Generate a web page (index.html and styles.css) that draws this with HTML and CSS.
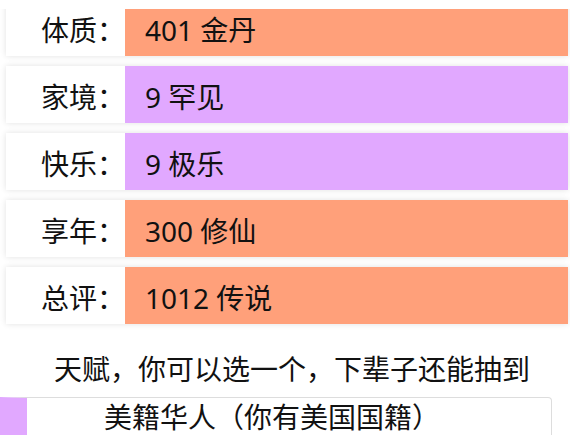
FILE: index.html
```html
<!DOCTYPE html>
<html lang="zh-CN">

<head>
    <meta charset="utf-8">
    <title>人生重开 - 结算</title>
    <link rel="stylesheet" href="styles.css">
</head>

<body>
    <div class="top-bar"></div>
    <ul class="summary">
        <li class="row">
            <span class="label">体质：</span>
            <span class="value orange">401 金丹</span>
        </li>
        <li class="row">
            <span class="label">家境：</span>
            <span class="value purple">9 罕见</span>
        </li>
        <li class="row">
            <span class="label">快乐：</span>
            <span class="value purple">9 极乐</span>
        </li>
        <li class="row">
            <span class="label">享年：</span>
            <span class="value orange">300 修仙</span>
        </li>
        <li class="row">
            <span class="label">总评：</span>
            <span class="value orange">1012 传说</span>
        </li>
    </ul>
    <div class="tip">天赋，你可以选一个，下辈子还能抽到</div>
    <ul class="talents">
        <li class="talent purple-edge">美籍华人（你有美国国籍）</li>
    </ul>
</body>

</html>
```

FILE: styles.css
```css
body {
    margin: 0;
    background-color: #fff;
    color: #111;
    font-family: "Noto Sans", "Noto Sans CJK SC", sans-serif;
    font-size: 28px;
}

.top-bar {
    position: fixed;
    top: 0;
    left: 0;
    right: 0;
    height: 9px;
    background-color: #fff;
    z-index: 2;
}

.summary {
    list-style: none;
    margin: -1px 2px 0 6px;
    padding: 0;
}

.row {
    display: flex;
    height: 57px;
    margin-bottom: 10px;
    box-shadow: 0 0 6px rgba(0, 0, 0, 0.12);
}

.label {
    width: 119px;
    background-color: #fff;
    text-align: right;
    line-height: 57px;
    padding-top: 3px;
    box-sizing: border-box;
}

.value {
    flex: 1;
    padding: 3px 0 0 20px;
    line-height: 57px;
    box-sizing: border-box;
}

.orange {
    background-color: #ffa07a;
}

.purple {
    background-color: #e1a8ff;
}

.tip {
    text-align: center;
    margin-top: 25px;
    line-height: 40px;
    padding-left: 14px;
}

.talents {
    list-style: none;
    margin: 8px 0 0 0;
    padding: 0;
    width: 552px;
}

.talent {
    border: 1px solid #ddd;
    border-radius: 0 4px 4px 0;
    text-align: center;
    line-height: 38px;
    height: 40px;
    padding-right: 34px;
}

.purple-edge {
    border-left: 27px solid #e1a8ff;
}
```
